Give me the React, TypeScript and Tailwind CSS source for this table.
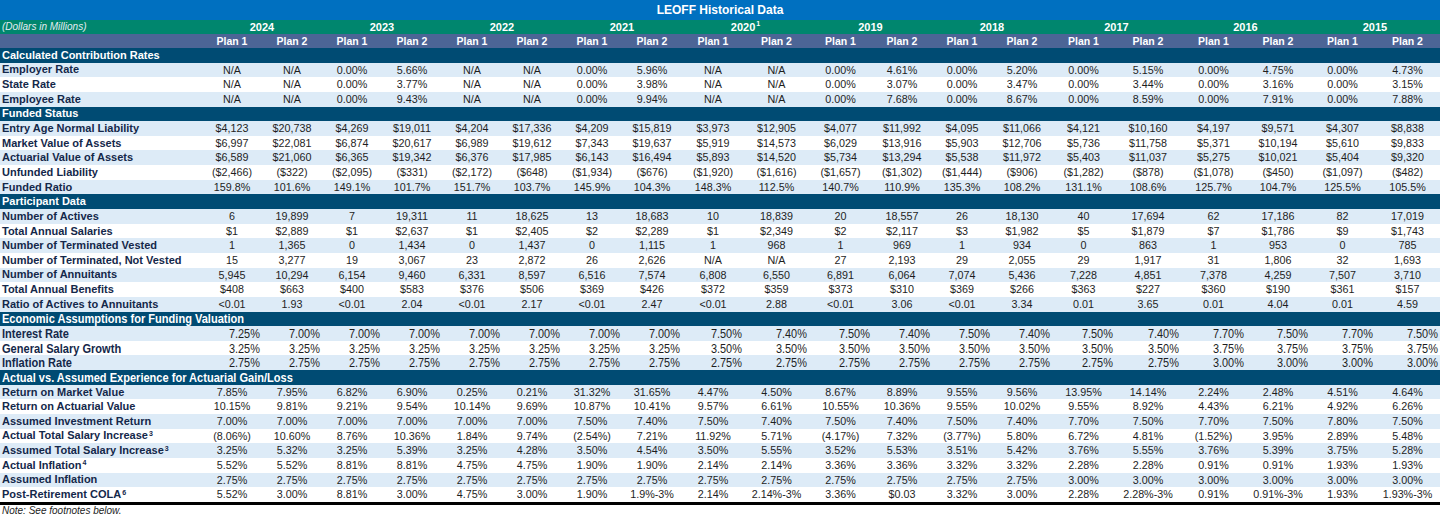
import React from "react";

type Row = { label: string; sup?: string; values: string[] };
type Section = { title: string; narrow?: boolean; narrowTitle?: boolean; rows: Row[] };

// label column + 20 plan columns (2024 .. 2015)
const GRID =
  "grid grid-cols-[202px_repeat(8,60px)_62px_65px_63px_60px_60px_60px_63px_66px_65px_64px_65px_65px]";

const YEARS = ["2024", "2023", "2022", "2021", "2020", "2019", "2018", "2017", "2016", "2015"];

const v = (s: string) => s.split(" ");

const SECTIONS: Section[] = [
  {
    title: "Calculated Contribution Rates",
    rows: [
      { label: "Employer Rate", values: v("N/A N/A 0.00% 5.66% N/A N/A 0.00% 5.96% N/A N/A 0.00% 4.61% 0.00% 5.20% 0.00% 5.15% 0.00% 4.75% 0.00% 4.73%") },
      { label: "State Rate", values: v("N/A N/A 0.00% 3.77% N/A N/A 0.00% 3.98% N/A N/A 0.00% 3.07% 0.00% 3.47% 0.00% 3.44% 0.00% 3.16% 0.00% 3.15%") },
      { label: "Employee Rate", values: v("N/A N/A 0.00% 9.43% N/A N/A 0.00% 9.94% N/A N/A 0.00% 7.68% 0.00% 8.67% 0.00% 8.59% 0.00% 7.91% 0.00% 7.88%") },
    ],
  },
  {
    title: "Funded Status",
    rows: [
      { label: "Entry Age Normal Liability", values: v("$4,123 $20,738 $4,269 $19,011 $4,204 $17,336 $4,209 $15,819 $3,973 $12,905 $4,077 $11,992 $4,095 $11,066 $4,121 $10,160 $4,197 $9,571 $4,307 $8,838") },
      { label: "Market Value of Assets", values: v("$6,997 $22,081 $6,874 $20,617 $6,989 $19,612 $7,343 $19,637 $5,919 $14,573 $6,029 $13,916 $5,903 $12,706 $5,736 $11,758 $5,371 $10,194 $5,610 $9,833") },
      { label: "Actuarial Value of Assets", values: v("$6,589 $21,060 $6,365 $19,342 $6,376 $17,985 $6,143 $16,494 $5,893 $14,520 $5,734 $13,294 $5,538 $11,972 $5,403 $11,037 $5,275 $10,021 $5,404 $9,320") },
      { label: "Unfunded Liability", values: v("($2,466) ($322) ($2,095) ($331) ($2,172) ($648) ($1,934) ($676) ($1,920) ($1,616) ($1,657) ($1,302) ($1,444) ($906) ($1,282) ($878) ($1,078) ($450) ($1,097) ($482)") },
      { label: "Funded Ratio", values: v("159.8% 101.6% 149.1% 101.7% 151.7% 103.7% 145.9% 104.3% 148.3% 112.5% 140.7% 110.9% 135.3% 108.2% 131.1% 108.6% 125.7% 104.7% 125.5% 105.5%") },
    ],
  },
  {
    title: "Participant Data",
    rows: [
      { label: "Number of Actives", values: v("6 19,899 7 19,311 11 18,625 13 18,683 10 18,839 20 18,557 26 18,130 40 17,694 62 17,186 82 17,019") },
      { label: "Total Annual Salaries", values: v("$1 $2,889 $1 $2,637 $1 $2,405 $2 $2,289 $1 $2,349 $2 $2,117 $3 $1,982 $5 $1,879 $7 $1,786 $9 $1,743") },
      { label: "Number of Terminated Vested", values: v("1 1,365 0 1,434 0 1,437 0 1,115 1 968 1 969 1 934 0 863 1 953 0 785") },
      { label: "Number of Terminated, Not Vested", values: v("15 3,277 19 3,067 23 2,872 26 2,626 N/A N/A 27 2,193 29 2,055 29 1,917 31 1,806 32 1,693") },
      { label: "Number of Annuitants", values: v("5,945 10,294 6,154 9,460 6,331 8,597 6,516 7,574 6,808 6,550 6,891 6,064 7,074 5,436 7,228 4,851 7,378 4,259 7,507 3,710") },
      { label: "Total Annual Benefits", values: v("$408 $663 $400 $583 $376 $506 $369 $426 $372 $359 $373 $310 $369 $266 $363 $227 $360 $190 $361 $157") },
      { label: "Ratio of Actives to Annuitants", values: v("<0.01 1.93 <0.01 2.04 <0.01 2.17 <0.01 2.47 <0.01 2.88 <0.01 3.06 <0.01 3.34 0.01 3.65 0.01 4.04 0.01 4.59") },
    ],
  },
  {
    title: "Economic Assumptions for Funding Valuation",
    narrow: true,
    narrowTitle: true,
    rows: [
      { label: "Interest Rate", values: v("7.25% 7.00% 7.00% 7.00% 7.00% 7.00% 7.00% 7.00% 7.50% 7.40% 7.50% 7.40% 7.50% 7.40% 7.50% 7.40% 7.70% 7.50% 7.70% 7.50%") },
      { label: "General Salary Growth", values: v("3.25% 3.25% 3.25% 3.25% 3.25% 3.25% 3.25% 3.25% 3.50% 3.50% 3.50% 3.50% 3.50% 3.50% 3.50% 3.50% 3.75% 3.75% 3.75% 3.75%") },
      { label: "Inflation Rate", values: v("2.75% 2.75% 2.75% 2.75% 2.75% 2.75% 2.75% 2.75% 2.75% 2.75% 2.75% 2.75% 2.75% 2.75% 2.75% 2.75% 3.00% 3.00% 3.00% 3.00%") },
    ],
  },
  {
    title: "Actual vs. Assumed Experience for Actuarial Gain/Loss",
    narrowTitle: true,
    rows: [
      { label: "Return on Market Value", values: v("7.85% 7.95% 6.82% 6.90% 0.25% 0.21% 31.32% 31.65% 4.47% 4.50% 8.67% 8.89% 9.55% 9.56% 13.95% 14.14% 2.24% 2.48% 4.51% 4.64%") },
      { label: "Return on Actuarial Value", values: v("10.15% 9.81% 9.21% 9.54% 10.14% 9.69% 10.87% 10.41% 9.57% 6.61% 10.55% 10.36% 9.55% 10.02% 9.55% 8.92% 4.43% 6.21% 4.92% 6.26%") },
      { label: "Assumed Investment Return", values: v("7.00% 7.00% 7.00% 7.00% 7.00% 7.00% 7.50% 7.40% 7.50% 7.40% 7.50% 7.40% 7.50% 7.40% 7.70% 7.50% 7.70% 7.50% 7.80% 7.50%") },
      { label: "Actual Total Salary Increase", sup: "3", values: v("(8.06%) 10.60% 8.76% 10.36% 1.84% 9.74% (2.54%) 7.21% 11.92% 5.71% (4.17%) 7.32% (3.77%) 5.80% 6.72% 4.81% (1.52%) 3.95% 2.89% 5.48%") },
      { label: "Assumed Total Salary Increase", sup: "3", values: v("3.25% 5.32% 3.25% 5.39% 3.25% 4.28% 3.50% 4.54% 3.50% 5.55% 3.52% 5.53% 3.51% 5.42% 3.76% 5.55% 3.76% 5.39% 3.75% 5.28%") },
      { label: "Actual Inflation", sup: "4", values: v("5.52% 5.52% 8.81% 8.81% 4.75% 4.75% 1.90% 1.90% 2.14% 2.14% 3.36% 3.36% 3.32% 3.32% 2.28% 2.28% 0.91% 0.91% 1.93% 1.93%") },
      { label: "Assumed Inflation", values: v("2.75% 2.75% 2.75% 2.75% 2.75% 2.75% 2.75% 2.75% 2.75% 2.75% 2.75% 2.75% 2.75% 2.75% 3.00% 3.00% 3.00% 3.00% 3.00% 3.00%") },
      { label: "Post-Retirement COLA", sup: "6", values: v("5.52% 3.00% 8.81% 3.00% 4.75% 3.00% 1.90% 1.9%-3% 2.14% 2.14%-3% 3.36% $0.03 3.32% 3.00% 2.28% 2.28%-3% 0.91% 0.91%-3% 1.93% 1.93%-3%") },
    ],
  },
];

// no narrow face is installed, so squeeze Liberation Sans horizontally
const NARROW_LEFT = "inline-block text-[13px] scale-x-[0.85] origin-left whitespace-nowrap";
const NARROW_RIGHT = "inline-block text-[13px] scale-x-[0.84] origin-right whitespace-nowrap";

const SectionHeader = ({ title, narrow }: { title: string; narrow?: boolean }) => (
  <div className="h-[14.65px] bg-[#004b73] flex items-center pl-[2px] overflow-hidden">
    <span className={`font-bold text-white leading-none ${narrow ? NARROW_LEFT : "text-[11px]"}`}>{title}</span>
  </div>
);

const DataRow = ({ row, index, narrow }: { row: Row; index: number; narrow?: boolean }) => (
  <div className={`${GRID} h-[14.65px] ${index % 2 === 0 ? "bg-[#ddebf7]" : "bg-white"}`}>
    <div className="flex items-center pl-[2px] whitespace-nowrap font-bold text-[#14284a] leading-none">
      {narrow ? (
        <span className={NARROW_LEFT}>{row.label}</span>
      ) : (
        <span className="text-[11px]">
          {row.label}
          {row.sup && <sup className="text-[7px] ml-[1px]">{row.sup}</sup>}
        </span>
      )}
    </div>
    {row.values.map((val, i) => (
      <div
        key={i}
        className={`flex items-center whitespace-nowrap text-[#1e1e1e] leading-none ${
          narrow ? "justify-end pr-[2px]" : "justify-center text-[10.75px]"
        }`}
      >
        {narrow ? <span className={NARROW_RIGHT}>{val}</span> : val}
      </div>
    ))}
  </div>
);

export default function App() {
  return (
    <div className="w-[1440px] h-[517px] bg-white font-['Liberation_Sans',Arial,sans-serif] overflow-hidden">
      {/* title */}
      <div className="h-[20px] bg-[#0070c0] flex items-center justify-center">
        <span className="text-white font-bold text-[12px] leading-none">LEOFF Historical Data</span>
      </div>

      {/* years */}
      <div className={`${GRID} h-[14px] bg-[#00866e]`}>
        <div className="flex items-center pl-[2px] italic text-[10px] text-[#e4ecf2] leading-none">
          (Dollars in Millions)
        </div>
        {YEARS.map((y) => (
          <div key={y} className="col-span-2 flex items-center justify-center text-white font-bold text-[11px] leading-none">
            {y}
            {y === "2020" && <sup className="text-[7px] ml-[1px]">1</sup>}
          </div>
        ))}
      </div>

      {/* plan headers */}
      <div className={`${GRID} h-[14px] bg-[#4c6596]`}>
        <div />
        {YEARS.flatMap((y) =>
          ["Plan 1", "Plan 2"].map((p) => (
            <div key={y + p} className="flex items-center justify-center text-white font-bold text-[10.5px] leading-none">
              {p}
            </div>
          ))
        )}
      </div>

      {SECTIONS.map((s) => (
        <div key={s.title}>
          <SectionHeader title={s.title} narrow={s.narrowTitle} />
          {s.rows.map((r, i) => (
            <DataRow key={r.label} row={r} index={i} narrow={s.narrow} />
          ))}
        </div>
      ))}

      <div className="h-[3px] bg-black" />
      <div className="h-[12px] flex items-center pl-[2px] italic text-[10px] text-[#1e1e1e] leading-none">
        Note: See footnotes below.
      </div>
    </div>
  );
}
